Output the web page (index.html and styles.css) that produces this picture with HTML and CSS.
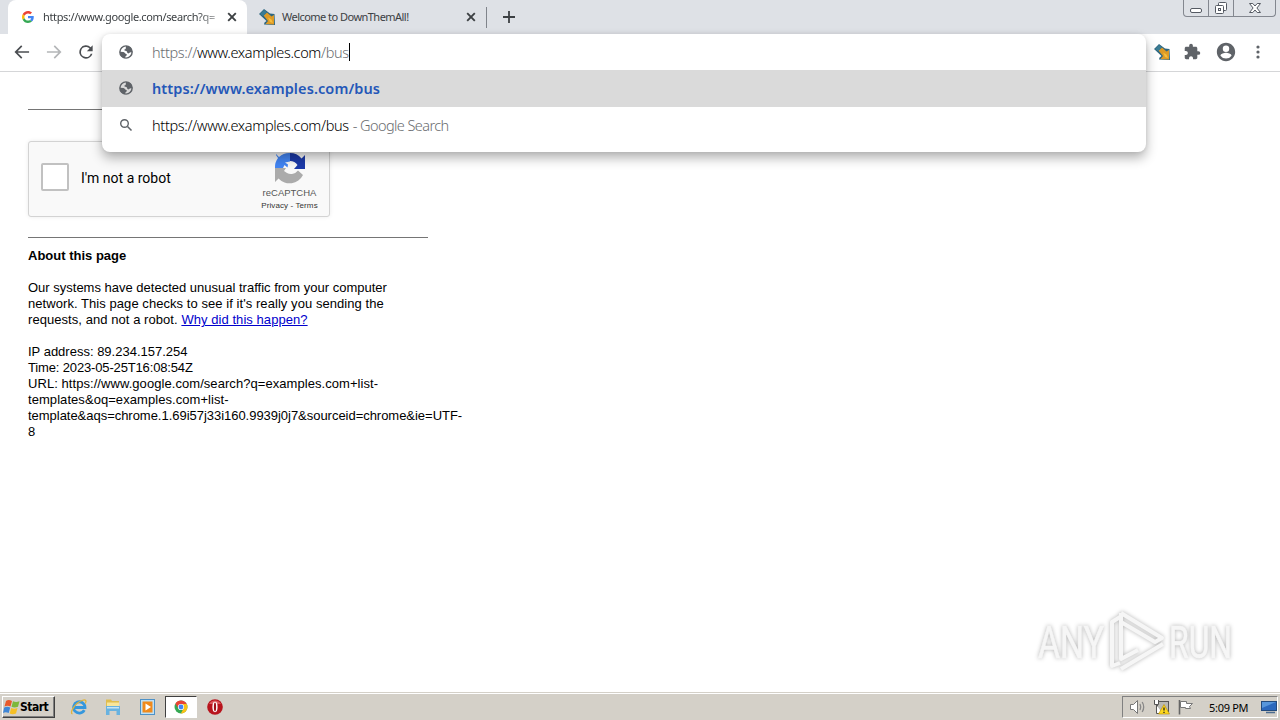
FILE: index.html
```html
<!DOCTYPE html>
<html lang="en">

<head>
    <meta charset="UTF-8">
    <meta name="viewport" content="width=device-width, initial-scale=1.0">
    <title>https://www.google.com/search</title>
    <link rel="stylesheet" href="styles.css">
</head>

<body>
    <!-- Shared icons -->
    <svg class="defs" width="0" height="0">
        <symbol id="globe" viewBox="0 0 24 24">
            <circle cx="12" cy="12" r="9.200" fill="none" stroke="#5f6368" stroke-width="2.200"/>
            <path d="M12 3c-1 1.500.5 2.500-.5 4-1 1-2.500 1-2 2.500.5 1 2.500.5 3.500 1.500s.5 2.500 2 3 2.500-1.500 4-1.500h2.500C21.500 7 18 2.500 12 3z"/>
            <path d="M3 11.500l5 .5c2 .3 2 2 3.500 2.500s2 1 1.500 2.500-2 1-2 2.500l-.5 2C6 20.500 2.500 16.500 3 11.500z"/>
        </symbol>
        <symbol id="dta" viewBox="0 0 16 16">
            <path d="M0 5L5 0l6 4.500 4.500.5.5 11-11-.5.500-2 2-1.500z" fill="#2d6680"/>
            <path d="M4.500 6.500L8 3.500l4.500 4L15 6v9.500L6.500 15l2.500-3z" fill="#dd9a25"/>
            <path d="M1 5l4-4 3 2.300-3.800 3.900z" fill="#3b7c94"/>
            <path d="M9 8.500l3.500 2 1.500 3.500-3-1z" fill="#f5bd3c"/>
        </symbol>
        <symbol id="cross" viewBox="0 0 10 10">
            <path d="M1.200 1.200l7.600 7.600M8.800 1.200L1.200 8.800" stroke="#3c4043" stroke-width="1.900"/>
        </symbol>
    </svg>

    <div class="browser">
        <div class="tabstrip">
            <div class="tab active">
                <svg class="favicon" viewBox="0 0 48 48">
                    <path fill="#EA4335" d="M24 9.500c3.540 0 6.710 1.220 9.210 3.600l6.850-6.850C35.900 2.380 30.470 0 24 0 14.620 0 6.510 5.380 2.560 13.220l7.980 6.190C12.430 13.720 17.740 9.500 24 9.500z"/>
                    <path fill="#4285F4" d="M46.980 24.550c0-1.570-.15-3.090-.38-4.550H24v9.020h12.940c-.58 2.960-2.260 5.480-4.780 7.180l7.730 6c4.510-4.180 7.090-10.360 7.090-17.650z"/>
                    <path fill="#FBBC05" d="M10.530 28.590c-.48-1.450-.76-2.990-.76-4.590s.27-3.140.76-4.590l-7.980-6.190C.92 16.460 0 20.120 0 24c0 3.880.92 7.540 2.560 10.780l7.970-6.190z"/>
                    <path fill="#34A853" d="M24 48c6.480 0 11.930-2.130 15.890-5.810l-7.730-6c-2.150 1.450-4.920 2.300-8.160 2.300-6.260 0-11.570-4.220-13.470-9.910l-7.980 6.190C6.510 42.620 14.620 48 24 48z"/>
                </svg>
                <span class="tab-title fade">https://www.google.com/search?q=</span>
                <svg class="close"><use href="#cross"/></svg>
            </div>
            <div class="tab">
                <svg class="favicon dta"><use href="#dta"/></svg>
                <span class="tab-title welcome">Welcome to DownThemAll!</span>
                <svg class="close"><use href="#cross"/></svg>
            </div>
            <svg class="new-tab" viewBox="0 0 12 12"><path d="M6 0v12M0 6h12" stroke="#3c4043" stroke-width="1.800"/></svg>
            <div class="window-buttons">
                <span class="win-btn"><svg width="14" height="16"><rect x="1.500" y="8.500" width="11" height="4" rx="1.500" fill="#fff" stroke="#555a63"/></svg></span>
                <span class="win-btn"><svg width="14" height="16"><rect x="4.500" y="2.500" width="8" height="8" rx="1" fill="#fff" stroke="#555a63"/><rect x="1.500" y="5.500" width="8" height="8" rx="1" fill="#fff" stroke="#555a63"/><rect x="4.500" y="8.500" width="2" height="2" fill="none" stroke="#555a63"/></svg></span>
                <span class="win-btn wide"><svg width="14" height="16"><path d="M1.500 3.500h3.300L7 6l2.200-2.500h3.300L8.900 8l3.600 4.500H9.200L7 10l-2.200 2.500H1.500L5.100 8z" fill="#fff" stroke="#555a63"/></svg></span>
            </div>
        </div>

        <div class="toolbar">
            <svg class="nav" viewBox="0 0 24 24" fill="#4b4e52"><path d="M20.500 11H6.800l5.600-5.600L11 4l-8 8 8 8 1.400-1.400L6.800 13h13.700z"/></svg>
            <svg class="nav" viewBox="0 0 24 24" fill="#b4b6b8"><path d="M3.500 11h13.700l-5.600-5.600L13 4l8 8-8 8-1.400-1.400 5.600-5.600H3.500z"/></svg>
            <svg class="nav" viewBox="0 0 24 24" fill="#4b4e52"><path d="M17.650 6.350A8 8 0 1 0 19.730 14h-2.080A6 6 0 1 1 12 6c1.660 0 3.140.69 4.220 1.780L13 11h7V4z"/></svg>
            <div class="actions">
                <svg class="dta" width="16" height="16"><use href="#dta"/></svg>
                <svg width="17" height="17" viewBox="1 0 23 23" fill="#5f6368"><path d="M20.500 11H19V7c0-1.100-.9-2-2-2h-4V3.500a2.500 2.500 0 0 0-5 0V5H4c-1.100 0-2 .9-2 2v3.800h1.500c1.500 0 2.700 1.200 2.700 2.700S5 16.200 3.500 16.200H2V20c0 1.100.9 2 2 2h3.800v-1.500c0-1.500 1.200-2.700 2.700-2.700s2.700 1.200 2.700 2.700V22H17c1.100 0 2-.9 2-2v-4h1.500a2.500 2.500 0 0 0 0-5z"/></svg>
                <svg width="22" height="22" viewBox="0 0 24 24" fill="#5f6368"><path d="M12 2C6.500 2 2 6.500 2 12s4.500 10 10 10 10-4.500 10-10S17.500 2 12 2zm0 3a3.500 3.500 0 1 1 0 7 3.500 3.500 0 0 1 0-7zm0 14.200a7.200 7.200 0 0 1-6-3.200c0-2 4-3.100 6-3.100s6 1.100 6 3.100a7.200 7.200 0 0 1-6 3.200z"/></svg>
                <svg width="4" height="14" fill="#5f6368"><circle cx="2" cy="2" r="1.600"/><circle cx="2" cy="7" r="1.600"/><circle cx="2" cy="12" r="1.600"/></svg>
            </div>
        </div>

        <!-- Address bar with its suggestions, lies over the page -->
        <div class="omnibox">
            <div class="row input">
                <svg class="row-icon"><use href="#globe"/></svg>
                <span class="url"><i>https://</i>www.examples.com<i>/bus</i></span><span class="caret"></span>
            </div>
            <div class="row selected">
                <svg class="row-icon"><use href="#globe"/></svg>
                <span class="url match">https://www.examples.com/bus</span>
            </div>
            <div class="row">
                <svg class="row-icon search" viewBox="0 0 14 14"><circle cx="5.500" cy="5.500" r="3.800" fill="none" stroke="#5f6368" stroke-width="1.400"/><path d="M8.500 8.500l4 4" stroke="#5f6368" stroke-width="1.600"/></svg>
                <span class="url">https://www.examples.com/bus</span><span class="hint">- Google Search</span>
            </div>
        </div>
    </div>

    <div class="page">
        <div class="line"></div>
        <div class="captcha">
            <span class="checkbox"></span>
            <span class="captcha-label">I'm not a robot</span>
            <div class="captcha-brand">
                <svg width="32" height="32" viewBox="0 0 32 32">
                    <path d="M16 1a15 15 0 0 1 11.500 5.400L31 3v14H20l3.500-4A9 9 0 0 0 16 9z" fill="#1c3aa9"/>
                    <path d="M16 1A15 15 0 0 0 5 5L2 2v1l2 3a15 15 0 0 0-3 10h8l1.500-3 3 2.500.5-3-3-2 5-1z" fill="#4285f4"/>
                    <path d="M1 16v14l3.500-3.500A15 15 0 0 0 29 23l-5-4.500a9 9 0 0 1-11 2.500l-3-2 2-3z" fill="#ababab"/>
                </svg>
                <span class="brand-name">reCAPTCHA</span>
                <span class="brand-links">Privacy - Terms</span>
            </div>
        </div>
        <div class="line"></div>
        <p class="about"><b>About this page</b></p>
        <p class="text">
            Our systems have detected unusual traffic from your computer<br>
            <span class="loose">network. This page checks to see if it's really you sending the</span><br>
            <span class="loose">requests, and not a robot. <a href="#">Why did this happen?</a></span>
        </p>
        <p class="text">
            IP address: 89.234.157.254<br>
            <span class="tight">Time: 2023-05-25T16:08:54Z</span><br>
            <span class="loose">URL: https://www.google.com/search?q=examples.com+list-</span><br>
            <span class="loose">templates&amp;oq=examples.com+list-</span><br>
            <span class="params">template&amp;aqs=chrome.1.69i57j33i160.9939j0j7&amp;sourceid=chrome&amp;ie=UTF-</span><br>
            8
        </p>
    </div>

    <svg class="watermark" width="220" height="76" viewBox="0 0 220 76">
        <text x="8" y="55" textLength="66" lengthAdjust="spacingAndGlyphs">ANY</text>
        <text x="139" y="55" textLength="63" lengthAdjust="spacingAndGlyphs">RUN</text>
        <path d="M90 14l-8 5v44l8-3M91 10v46l17-9M91 10l41 25-7 4-34-20M91 66l42-25"/>
    </svg>

    <div class="taskbar">
        <div class="start">
            <svg width="17" height="16" viewBox="0 0 17 16">
                <path d="M3 2c2-1.500 4-1 6 0L7.500 7.500c-2-1-4-1-6 0z" fill="#e8592b"/>
                <path d="M10 2.200c2 1 4 1 6.500 0L15 7.700c-2.500 1-4.500 1-6.500 0z" fill="#7db83a"/>
                <path d="M1.200 8.500c2-1 4-1 6 0L5.700 14c-2-1-4-1-5.700 0z" fill="#3f86d6"/>
                <path d="M8.200 8.900c2 1 4 1 6.300 0L13 14.400c-2.500 1-4.300 1-6.300 0z" fill="#f6c026"/>
            </svg>
            <b>Start</b>
        </div>
        <div class="launchers">
            <span class="launcher">
                <svg width="18" height="18" viewBox="0 0 18 18"><path d="M14.300 12.200A5.700 5.700 0 1 1 15 9.500H5" fill="none" stroke="#3597dd" stroke-width="2.800"/><path d="M2.500 16C-1 15 5 5 12 2.500c4-1.500 4.800.5 3.300 3" fill="none" stroke="#e0b43c" stroke-width="1.300"/></svg>
            </span>
            <span class="launcher">
                <svg width="18" height="18" viewBox="0 0 18 18"><path d="M2 1.500h5l1 1.500h7v9H2z" fill="#e0bd4e"/><path d="M3 4.500h12V11H3z" fill="#f8e59a"/><path d="M2 8h14v9h-3.500v-4h-7v4H2z" fill="#68b2e0"/><path d="M3 9h12v1.500H3z" fill="#c4e4f6"/></svg>
            </span>
            <span class="launcher">
                <svg width="18" height="18" viewBox="0 0 18 18"><rect x="2.500" y="1.500" width="14" height="15" fill="#bfe0f5" stroke="#4d91c7"/><rect x="4.500" y="3.500" width="10" height="11" fill="#f08a1c"/><path d="M7.500 5.500v7l5.500-3.500z" fill="#fff"/></svg>
            </span>
            <span class="launcher pressed">
                <svg width="14" height="14" viewBox="0 0 14 14"><circle cx="7" cy="7" r="6.500" fill="#34a853"/><path d="M1.400 3.800A6.500 6.500 0 0 1 12.700 4H7L4.500 8.500z" fill="#ea4335"/><path d="M12.700 4A6.500 6.500 0 0 1 6.800 13.500L9.600 8.500 7 4z" fill="#fbc116"/><circle cx="7" cy="7" r="3.100" fill="#fff"/><circle cx="7" cy="7" r="2.400" fill="#4285f4"/></svg>
            </span>
            <span class="launcher">
                <svg width="18" height="18" viewBox="0 0 18 18"><circle cx="9" cy="9" r="7.800" fill="#b8141d"/><path d="M3 6a7 7 0 0 1 12 0z" fill="#dc5a5e"/><ellipse cx="9" cy="9" rx="2.600" ry="5.200" fill="#fff"/><ellipse cx="9" cy="9" rx="1.100" ry="4.400" fill="#a01018"/></svg>
            </span>
        </div>
        <div class="tray">
            <svg width="18" height="16" viewBox="0 0 18 16"><path d="M1.500 5.500h3l4-4v13l-4-4h-3z" fill="#fff" stroke="#777"/><path d="M11 5q1.500 3 0 6M13.200 3q3 5 0 10" fill="none" stroke="#888" stroke-width="1.300"/></svg>
            <svg width="18" height="16" viewBox="0 0 18 16"><rect x="4.500" y="2.500" width="11" height="10" fill="#b9b9b4" stroke="#555"/><path d="M1.500 1v4.500h4V1M3.500 6v8.500h6" fill="#fff" stroke="#555"/><path d="M11 5.500L16.500 15h-11z" fill="#ffd91d" stroke="#b58b00" stroke-width=".6"/><path d="M11 8.500v3M11 12.700v1.200" stroke="#222" stroke-width="1.300"/></svg>
            <svg width="18" height="16" viewBox="0 0 18 16"><path d="M2.500 1v14.500" stroke="#666" stroke-width="1.600"/><path d="M3.500 2.500h6v2h6l-3 3 1 2h-5v-1h-5z" fill="#fff" stroke="#777"/></svg>
            <span class="clock">5:09 PM</span>
            <svg width="16" height="14" viewBox="0 0 16 14"><rect x=".5" y="1.500" width="15" height="9" fill="#2b68bd" stroke="#234b7d"/><path d="M1 2h14L1 8z" fill="#5796db"/><path d="M5 12.500h9" stroke="#4d6c8f" stroke-width="1.500"/></svg>
        </div>
    </div>
</body>

</html>
```
FILE: styles.css
```css
* {
    box-sizing: border-box;
}

body {
    display: flex;
    flex-direction: column;
    width: 1280px;
    height: 720px;
    margin: 0;
    overflow: hidden;
    background: #fff;
    font-family: "Liberation Sans", Arial, sans-serif;
    color: #000;
}

svg {
    display: block;
    flex: none;
}

p {
    margin: 0;
}

.defs {
    position: absolute;
}

.browser {
    position: relative;
    height: 72px;
    flex: none;
}

/* Tabs */
.tabstrip {
    display: flex;
    height: 34px;
    padding-left: 8px;
    background: #dee1e6;
}

.tab {
    display: flex;
    align-items: center;
    width: 239px;
    padding-left: 12px;
    font-family: "Noto Sans", sans-serif;
    font-size: 11px;
    color: #3c4043;
    border-right: 1px solid transparent;
}

.tab.active {
    background: #fff;
    border-radius: 8px 8px 0 0;
}

.tab:not(.active) {
    border-image: linear-gradient(transparent 8px, #80848b 8px, #80848b 27px, transparent 27px) 1;
    border-style: solid;
    border-width: 0 1px 0 0;
    width: 240px;
}

.favicon {
    width: 16px;
    height: 16px;
    padding: 2px;
}

.favicon.dta {
    padding: 0;
}

.tab-title {
    width: 175px;
    margin-left: 7px;
    padding-bottom: 2px;
    letter-spacing: -.53px;
    white-space: nowrap;
}

.tab-title.fade {
    letter-spacing: -.36px;
    -webkit-mask-image: linear-gradient(90deg, #000 155px, rgba(0, 0, 0, .3));
    mask-image: linear-gradient(90deg, #000 155px, rgba(0, 0, 0, .3));
}

.close {
    width: 10px;
    height: 10px;
    margin-left: 9px;
}

.new-tab {
    width: 12px;
    height: 12px;
    margin: 11px 0 0 16px;
}

.window-buttons {
    display: flex;
    height: 17px;
    margin-left: auto;
    margin-right: 4px;
    border: 1px solid #83878f;
    border-top: none;
    border-radius: 0 0 4px 4px;
}

.win-btn {
    display: flex;
    justify-content: center;
    width: 25px;
    border-right: 1px solid #83878f;
}

.win-btn.wide {
    width: 41px;
    border-right: none;
}

/* Toolbar */
.toolbar {
    display: flex;
    align-items: center;
    gap: 12px;
    height: 38px;
    padding: 0 20px 2px 12px;
    border-bottom: 1px solid #d5d6d8;
}

.nav {
    width: 20px;
    height: 20px;
}

.actions {
    display: flex;
    align-items: center;
    gap: 14px;
    margin-left: auto;
}

.actions svg:last-child {
    margin-left: 5px;
}

/* Address bar */
.omnibox {
    position: absolute;
    left: 102px;
    top: 34px;
    z-index: 2;
    width: 1044px;
    height: 118px;
    background: #fff;
    border-radius: 8px;
    box-shadow: 0 6px 12px rgba(0, 0, 0, .3), 0 0 4px rgba(0, 0, 0, .08);
}

.row {
    display: flex;
    align-items: center;
    height: 37px;
    padding: 0 0 1px 16px;
    font-family: "Noto Sans", sans-serif;
    font-size: 14.5px;
    font-weight: 300;
    white-space: nowrap;
}

.row.input {
    height: 36px;
}

.row.selected {
    background: #dadada;
}

.row-icon {
    width: 16px;
    height: 16px;
    margin-right: 18px;
    fill: #5f6368;
}

.row-icon.search {
    width: 14px;
    height: 14px;
    margin: 0 19px 0 1px;
}

.url {
    letter-spacing: -.34px;
}

.url i {
    font-style: normal;
    color: #6a6d70;
}

.match {
    font-weight: 600;
    letter-spacing: .1px;
    color: #2457b8;
}

.caret {
    width: 1px;
    height: 18px;
    background: #000;
}

.hint {
    margin-left: 4px;
    letter-spacing: -.58px;
    color: #6a6d70;
}

/* Page */
.page {
    flex: 1;
    padding: 37px 28px 0;
    font-size: 13px;
    line-height: 16px;
}

.line {
    width: 400px;
    height: 1px;
    background: #757575;
}

.captcha {
    display: flex;
    align-items: center;
    width: 302px;
    height: 76px;
    margin: 31px 0 20px;
    padding: 0 11px 0 12px;
    background: #f9f9f9;
    border: 1px solid #d3d3d3;
    border-radius: 3px;
    box-shadow: 0 0 4px rgba(0, 0, 0, .08);
}

.checkbox {
    width: 28px;
    height: 28px;
    margin-top: -4px;
    background: #fff;
    border: 2px solid #c1c1c1;
    border-radius: 2px;
}

.captcha-label {
    margin: -2px 0 0 12px;
    font-family: Roboto, sans-serif;
    font-size: 14px;
}

.captcha-brand {
    display: flex;
    flex-direction: column;
    align-items: center;
    width: 57px;
    margin: 5px 0 0 auto;
    font-family: "Liberation Sans", sans-serif;
    color: #555;
    white-space: nowrap;
}

.brand-name {
    margin-top: 2px;
    font-size: 9.5px;
    line-height: 14px;
}

.brand-links {
    font-size: 8px;
    line-height: 11px;
    letter-spacing: .1px;
    color: #333;
}

.about {
    margin-top: 10px;
}

.text {
    margin-top: 16px;
    white-space: nowrap;
}

.text a {
    color: #00c;
}

.loose {
    letter-spacing: .06px;
}

.tight {
    letter-spacing: -.15px;
}

.params {
    letter-spacing: -.03px;
}

/* Watermark */
.watermark {
    position: absolute;
    left: 1030px;
    top: 603px;
    filter: drop-shadow(0 0 2px rgba(0, 0, 0, .3));
}

.watermark text {
    font-family: Roboto, sans-serif;
    font-size: 45px;
    fill: #f6f6f6;
    stroke: #f6f6f6;
    stroke-width: .6;
}

.watermark path {
    fill: none;
    stroke: #f6f6f6;
    stroke-width: 4;
    stroke-linejoin: round;
}

/* Taskbar */
.taskbar {
    display: flex;
    align-items: center;
    flex: none;
    height: 28px;
    padding: 1px 2px 0;
    background: #d4d0c8;
    border-top: 1px solid #d4d0c8;
    box-shadow: inset 0 1px #fff;
    font-family: "DejaVu Sans Condensed", "DejaVu Sans", sans-serif;
    font-size: 12px;
}

.start {
    display: flex;
    align-items: center;
    width: 53px;
    height: 22px;
    border: 1px solid;
    border-color: #fff #404040 #404040 #fff;
    box-shadow: inset -1px -1px #808080;
}

.start b {
    padding-bottom: 1px;
    letter-spacing: -.5px;
}

.launchers {
    display: flex;
    align-items: center;
    gap: 2px;
    margin-left: 8px;
}

.launcher {
    display: flex;
    align-items: center;
    justify-content: center;
    width: 32px;
    height: 22px;
}

.launcher.pressed {
    background: #fff;
    border: 1px solid;
    border-color: #404040 #fff #fff #404040;
}

.tray {
    display: flex;
    align-items: center;
    gap: 6px;
    width: 156px;
    height: 22px;
    margin-left: auto;
    padding-left: 6px;
    border: 1px solid;
    border-color: #808080 #fff #fff #808080;
}

.clock {
    width: 46px;
    margin-left: 8px;
    font-family: "Noto Sans", sans-serif;
    font-size: 11px;
    letter-spacing: -.3px;
    white-space: nowrap;
}
```
